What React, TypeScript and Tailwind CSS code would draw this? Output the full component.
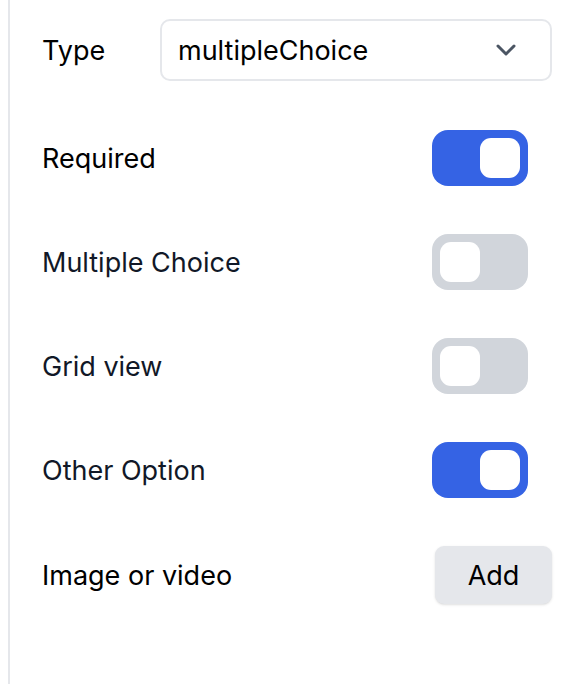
import { useState } from "react";

function Toggle({ on, onChange }: { on: boolean; onChange: () => void }) {
  return (
    <button
      onClick={onChange}
      className={`flex h-14 w-24 items-center rounded-[16px] p-2 transition-colors ${
        on ? "justify-end bg-[#3563e4]" : "justify-start bg-[#d1d5db]"
      }`}
    >
      <span className="h-10 w-10 rounded-[11px] bg-white" />
    </button>
  );
}

export default function App() {
  const [flags, setFlags] = useState({
    required: true,
    multiple: false,
    grid: false,
    other: true,
  });

  const rows: { key: keyof typeof flags; label: string; tone: string }[] = [
    { key: "required", label: "Required", tone: "text-black" },
    { key: "multiple", label: "Multiple Choice", tone: "text-[#111827]" },
    { key: "grid", label: "Grid view", tone: "text-[#111827]" },
    { key: "other", label: "Other Option", tone: "text-[#111827]" },
  ];

  return (
    <div className="h-[684px] w-[578px] bg-white font-['Inter',sans-serif] text-[27px]">
      <div className="ml-2 h-full border-l-2 border-[#e5e7eb] pl-[32px] pr-[26px] pt-[19px]">
        <div className="flex items-center">
          <span className="w-[118px] shrink-0 pt-[2px] text-black">Type</span>
          <div className="flex h-[62px] flex-1 items-center justify-between rounded-[10px] border-2 border-[#e5e7eb] pl-[16px] pr-[33px]">
            <span className="pt-[2px] text-black">multipleChoice</span>
            <svg width="22" height="14" viewBox="0 0 22 14" fill="none">
              <path
                d="M3 3l8 8 8-8"
                stroke="#4b5563"
                strokeWidth="3"
                strokeLinecap="round"
                strokeLinejoin="round"
              />
            </svg>
          </div>
        </div>

        <div className="mt-[49px] flex flex-col gap-12">
          {rows.map((r) => (
            <div key={r.key} className="flex items-center justify-between pr-[24px]">
              <span className={`pt-[2px] ${r.tone}`}>{r.label}</span>
              <Toggle
                on={flags[r.key]}
                onChange={() => setFlags({ ...flags, [r.key]: !flags[r.key] })}
              />
            </div>
          ))}
          <div className="flex items-center justify-between">
            <span className="pt-[2px] text-black">Image or video</span>
            <button className="h-[58px] w-[117px] rounded-[9px] bg-[#e5e7eb] pt-[2px] text-black shadow-sm">
              Add
            </button>
          </div>
        </div>
      </div>
    </div>
  );
}
